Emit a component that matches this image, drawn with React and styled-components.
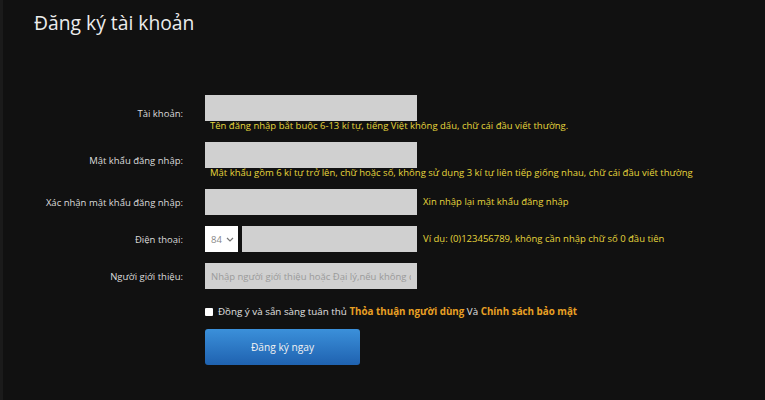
import React from 'react';
import styled, { createGlobalStyle } from 'styled-components';

const GlobalStyle = createGlobalStyle`
  html, body {
    margin: 0;
    padding: 0;
    background: #111111;
  }
  body {
    font-family: "Open Sans", "Noto Sans", sans-serif;
  }
`;

const Page = styled.div`
  min-height: 400px;
  box-sizing: border-box;
  border-left: 3px solid #1b1b1b;
  background: #111111;
  padding-top: 11px;
`;

const Title = styled.h1`
  margin: 0 0 0 31px;
  font-size: 19.3px;
  line-height: 24px;
  font-weight: 400;
  color: #ececec;
`;

const Form = styled.form`
  margin-top: 60px;
  display: flex;
  flex-direction: column;
`;

const Row = styled.div`
  display: flex;
  align-items: center;
  padding-bottom: 11px;
`;

const Label = styled.label`
  width: 180px;
  margin-right: 22px;
  text-align: right;
  font-size: 9.5px;
  color: #dcdcdc;
`;

const Field = styled.div`
  display: flex;
  flex-direction: column;
`;

const Line = styled.div`
  display: flex;
  align-items: center;
`;

const Input = styled.input`
  width: ${(p) => p.$w || 212}px;
  height: 26px;
  box-sizing: border-box;
  border: none;
  background: #d0d0d0;
  padding: 0 6px;
  font-family: inherit;
  font-size: 9.5px;
  color: #333;
  outline: none;
  &::placeholder {
    color: #9a9a9a;
  }
`;

const Select = styled.div`
  width: 33px;
  height: 26px;
  box-sizing: border-box;
  background: #ffffff;
  margin-right: 4px;
  display: flex;
  align-items: center;
  padding-left: 6px;
  gap: 4px;
  font-size: 9.5px;
  color: #888;
`;

const Hint = styled.span`
  font-size: 9.5px;
  line-height: 10px;
  color: #e6d63c;
  padding-left: ${(p) => (p.$inline ? 6 : 5)}px;
  white-space: nowrap;
`;

const Agree = styled.div`
  margin: 5px 0 0 202px;
  display: flex;
  align-items: center;
  gap: 5px;
  font-size: 9.8px;
  line-height: 14px;
  color: #e2e2e2;
`;

const Check = styled.span`
  width: 8px;
  height: 8px;
  background: #fff;
  border-radius: 1px;
`;

const Link = styled.span`
  color: #e8a024;
  font-weight: 700;
`;

const Button = styled.button`
  margin: 10px 0 0 202px;
  width: 155px;
  height: 36px;
  border: none;
  border-radius: 3px;
  background: linear-gradient(#3b90da, #1f62b0);
  color: #f2f2f2;
  font-family: inherit;
  font-size: 10.2px;
  cursor: pointer;
`;

const Chevron = () => (
  <svg width="8" height="5" viewBox="0 0 8 5" fill="none">
    <path d="M1 1l3 3 3-3" stroke="#777" strokeWidth="1.2" />
  </svg>
);

export default function App() {
  return (
    <>
      <GlobalStyle />
      <Page>
        <Title>Đăng ký tài khoản</Title>
        <Form onSubmit={(e) => e.preventDefault()}>
          <Row>
            <Label>Tài khoản:</Label>
            <Field>
              <Input />
              <Hint>Tên đăng nhập bắt buộc 6-13 kí tự, tiếng Việt không dấu, chữ cái đầu viết thường.</Hint>
            </Field>
          </Row>
          <Row>
            <Label>Mật khẩu đăng nhập:</Label>
            <Field>
              <Input type="password" />
              <Hint>Mật khẩu gồm 6 kí tự trở lên, chữ hoặc số, không sử dụng 3 kí tự liên tiếp giống nhau, chữ cái đầu viết thường</Hint>
            </Field>
          </Row>
          <Row>
            <Label>Xác nhận mật khẩu đăng nhập:</Label>
            <Line>
              <Input type="password" />
              <Hint $inline>Xin nhập lại mật khẩu đăng nhập</Hint>
            </Line>
          </Row>
          <Row>
            <Label>Điện thoại:</Label>
            <Line>
              <Select>
                84 <Chevron />
              </Select>
              <Input $w={175} />
              <Hint $inline>Ví dụ: (0)123456789, không cần nhập chữ số 0 đầu tiên</Hint>
            </Line>
          </Row>
          <Row>
            <Label>Người giới thiệu:</Label>
            <Input placeholder="Nhập người giới thiệu hoặc Đại lý,nếu không có thể bỏ qua" />
          </Row>
          <Agree>
            <Check />
            <span>
              Đồng ý và sẵn sàng tuân thủ <Link>Thỏa thuận người dùng</Link> Và <Link>Chính sách bảo mật</Link>
            </span>
          </Agree>
          <Button type="submit">Đăng ký ngay</Button>
        </Form>
      </Page>
    </>
  );
}
